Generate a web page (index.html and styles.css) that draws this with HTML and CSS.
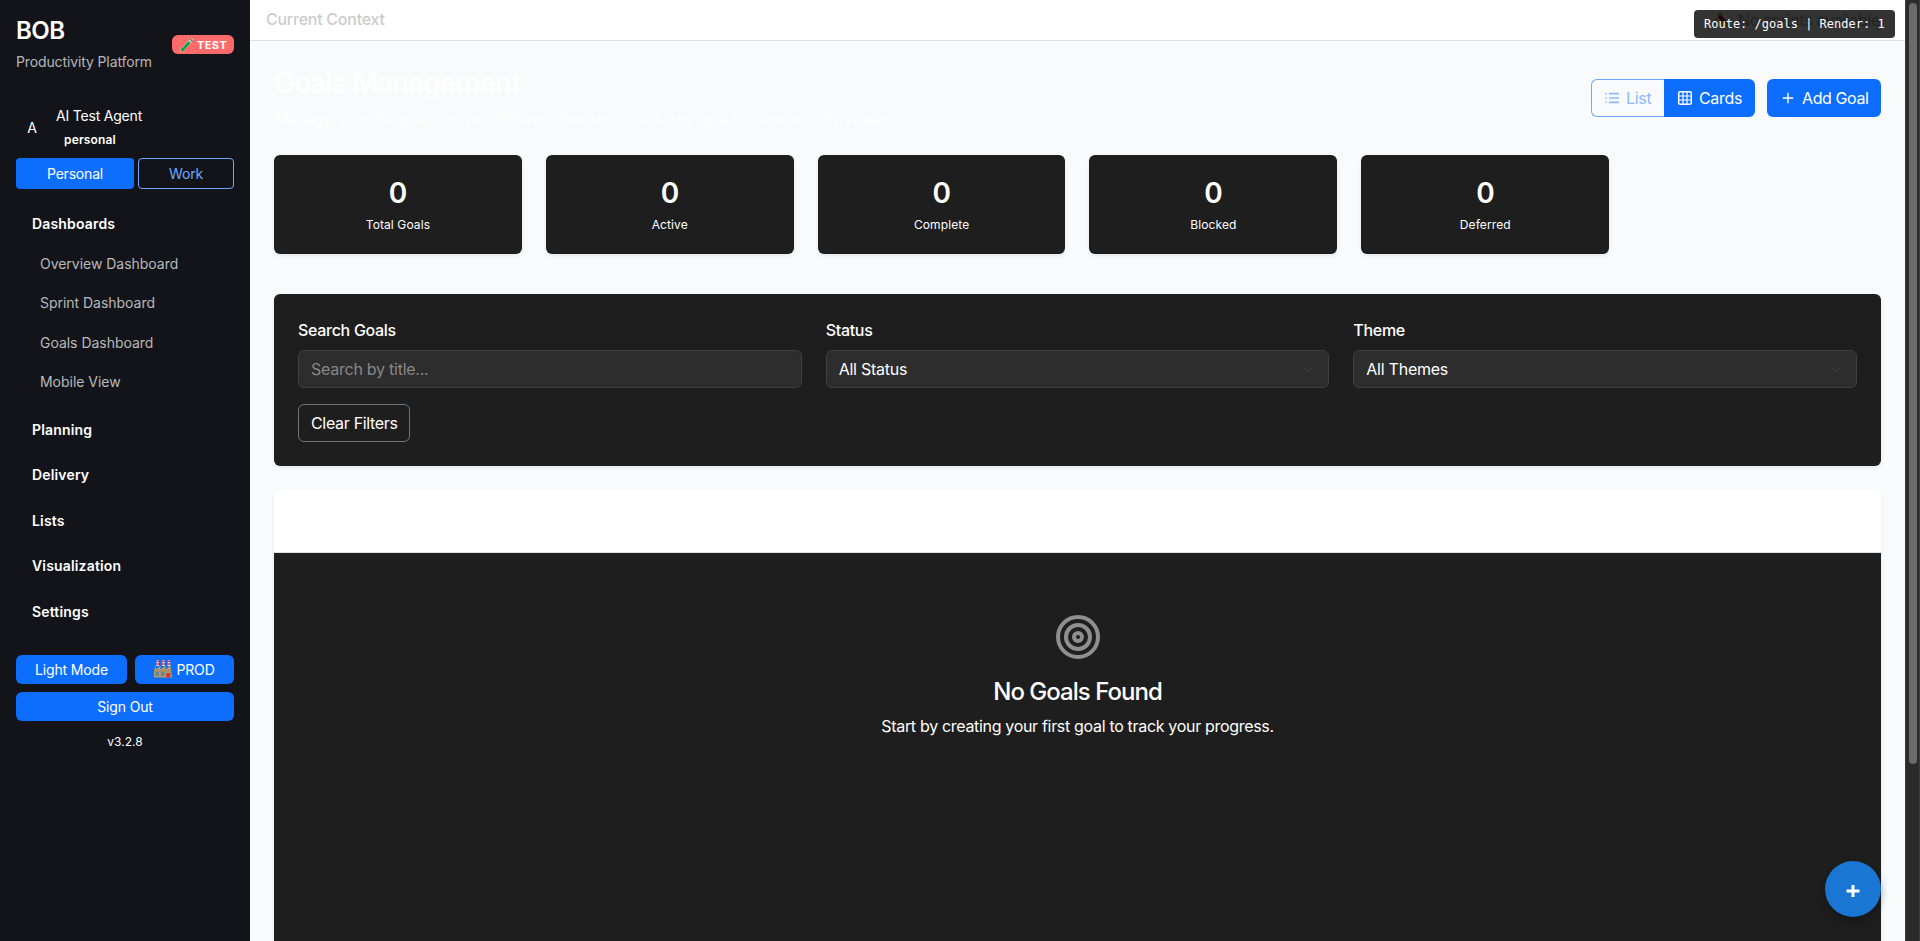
FILE: index.html
```html
<!DOCTYPE html>
<html lang="en">
<head>
<meta charset="utf-8">
<title>BOB - Goals</title>
<link rel="stylesheet" href="styles.css">
</head>
<body>
<div class="app">
  <aside class="sidebar">
    <div class="brand">
      <div>
        <h4 class="brand-name">BOB</h4>
        <div class="brand-sub">Productivity Platform</div>
      </div>
      <span class="badge-test"><svg width="14" height="14" viewBox="0 0 14 14"><path d="M2 12.2 11.3 2" stroke="#b9d9c4" stroke-width="3.4" stroke-linecap="round"/><path d="M2.2 12 8.800 4.800" stroke="#149a3c" stroke-width="2.6" stroke-linecap="round"/><path d="M10 1 12.500 3.200" stroke="#7e6a72" stroke-width="1.200" stroke-linecap="round"/></svg><span class="badge-text">TEST</span></span>
    </div>
    <div class="user">
      <span class="avatar">A</span>
      <div class="user-info"><div class="user-name">AI Test Agent</div><div class="user-role">personal</div></div>
    </div>
    <div class="persona"><button class="btn-sm btn-personal">Personal</button><button class="btn-sm btn-work">Work</button></div>
    <nav class="nav">
      <div class="group">Dashboards</div>
      <div class="sub">
        <a class="item">Overview Dashboard</a>
        <a class="item">Sprint Dashboard</a>
        <a class="item">Goals Dashboard</a>
        <a class="item">Mobile View</a>
      </div>
      <div class="group">Planning</div>
      <div class="group">Delivery</div>
      <div class="group">Lists</div>
      <div class="group">Visualization</div>
      <div class="group">Settings</div>
    </nav>
    <div class="foot">
      <div class="foot-row">
        <button class="btn-foot btn-light">Light Mode</button>
        <button class="btn-foot btn-prod"><svg width="18" height="18" viewBox="0 0 18 18"><path d="M2.300 6 2.700 0h2l.4 6zM8 6l.4-6h2l.4 6zM13.600 6 14 0h2l.4 6z" fill="#e9e4e6"/><path d="M2.600 1.200h2.200M2.400 4h2.600M8.300 1.200h2.200M8.100 4h2.600M13.900 1.200h2.200M13.700 4h2.600" stroke="#d8303c" stroke-width="1.500"/><path d="M0 17.500V10l2-5v4.500L6.500 5.500v4L11.500 5.500v4L16.500 5.500 18 17.500z" fill="#b79a6b"/><path d="M0 11h18" stroke="#94784f" stroke-width=".8"/><path d="M1.500 12h3.500v4H1.500zM7 12h3.500v4H7z" fill="#5f8797"/><path d="M12.300 13h4v4.500h-4z" fill="#d6342d"/></svg><span>PROD</span></button>
      </div>
      <button class="btn-foot btn-out">Sign Out</button>
      <div class="version">v3.2.8</div>
    </div>
  </aside>
  <div class="content">
    <header class="topbar">
      <span class="context">Current Context</span>
      <span class="sprints"><svg width="16" height="16" viewBox="0 0 16 16"><circle cx="6" cy="2.500" r="2" fill="#f0b428"/><path d="M6 5 10 9" stroke="#b3123c" stroke-width="4" stroke-linecap="round"/><path d="M9 10 6 13H2M10 10l3 2v3M5 6 1 8" stroke="#f0b428" stroke-width="1.500" fill="none"/></svg>No sprints available</span>
    </header>
    <main class="main">
      <div class="page-head">
        <div>
          <h2 class="title">Goals Management</h2>
          <p class="subtitle">Manage your life goals across different themes - Click any goal to view activity stream</p>
        </div>
        <div class="actions">
          <div class="toggle">
            <button class="btn btn-list"><svg width="16" height="16" viewBox="0 0 16 16"><path d="M5 3.600h10M5 8h10M5 12.400h10" stroke="currentColor" stroke-width="1.700"/><path d="M1 3.600h2M1 8h2M1 12.400h2" stroke="currentColor" stroke-width="1.700" opacity=".6"/></svg>List</button>
            <button class="btn btn-cards"><svg width="16" height="16" viewBox="0 0 16 16"><rect x="1.700" y="1.700" width="12.600" height="12.600" rx="1.500" fill="none" stroke="currentColor" stroke-width="1.500"/><path d="M6 1.500v13M10 1.500v13M1.500 6h13M1.500 10h13" stroke="currentColor" stroke-width="1.200"/></svg>Cards</button>
          </div>
          <button class="btn btn-add"><svg width="16" height="16" viewBox="0 0 16 16"><path d="M8 2.800v10.400M2.800 8h10.400" stroke="currentColor" stroke-width="1.400"/></svg>Add Goal</button>
        </div>
      </div>
      <section class="stats">
        <div class="stat"><div class="num">0</div><div class="lbl">Total Goals</div></div>
        <div class="stat"><div class="num">0</div><div class="lbl">Active</div></div>
        <div class="stat"><div class="num">0</div><div class="lbl">Complete</div></div>
        <div class="stat"><div class="num">0</div><div class="lbl">Blocked</div></div>
        <div class="stat"><div class="num">0</div><div class="lbl">Deferred</div></div>
      </section>
      <section class="filters">
        <div class="fields">
          <div><label class="label">Search Goals</label><div class="control"><span class="placeholder">Search by title...</span></div></div>
          <div><label class="label">Status</label><div class="control"><span>All Status</span><svg class="chev" width="16" height="12" viewBox="0 0 16 16"><path d="m2 5 6 6 6-6" fill="none" stroke="#343a40" stroke-width="2" stroke-linecap="round" stroke-linejoin="round"/></svg></div></div>
          <div><label class="label">Theme</label><div class="control"><span>All Themes</span><svg class="chev" width="16" height="12" viewBox="0 0 16 16"><path d="m2 5 6 6 6-6" fill="none" stroke="#343a40" stroke-width="2" stroke-linecap="round" stroke-linejoin="round"/></svg></div></div>
        </div>
        <button class="btn btn-clear">Clear Filters</button>
      </section>
      <section class="list-card">
        <div class="list-head"></div>
        <div class="empty">
          <svg width="48" height="48" viewBox="0 0 24 24" fill="none" stroke="#8f8f8f" stroke-width="2"><circle cx="12" cy="12" r="10"/><circle cx="12" cy="12" r="6"/><circle cx="12" cy="12" r="2"/></svg>
          <h4 class="empty-title">No Goals Found</h4>
          <p class="empty-text">Start by creating your first goal to track your progress.</p>
        </div>
      </section>
    </main>
  </div>
  <div class="scrollbar"><div class="thumb"></div></div>
</div>
<div class="route">Route: /goals | Render: 1</div>
<button class="fab"><svg width="14" height="14" viewBox="0 0 14 14"><path d="M7 1v12M.5 7h13" stroke="#fff" stroke-width="3"/></svg></button>
</body>
</html>
```
FILE: styles.css
```css
* { box-sizing: border-box; margin: 0; padding: 0; }
body {
  height: 941px;
  overflow: hidden;
  background: #f8fafc;
  color: #fff;
  font: 400 16px/24px Inter, "Liberation Sans", sans-serif;
  letter-spacing: -0.32px;
}
button { font: inherit; letter-spacing: inherit; border: 0; color: #fff; white-space: nowrap; }
svg { flex: none; display: block; }
.app { display: flex; height: 941px; }

.sidebar { width: 250px; flex: none; background: #121419; padding: 16px; font-size: 14px; line-height: 21px; letter-spacing: -0.03px; }
.brand { display: flex; align-items: center; justify-content: space-between; height: 57px; }
.brand-name { font-size: 24px; line-height: 29px; font-weight: 600; letter-spacing: -0.5px; margin-top: -1px; margin-bottom: 6px; }
.brand-sub { color: #b5b6b8; letter-spacing: -0.12px; }
.badge-test { display: flex; align-items: center; gap: 3px; width: 62px; height: 19px; padding-left: 8px; border-radius: 6px; background: #ff6b6b; }
.badge-text { font-size: 11px; font-weight: 700; line-height: 20px; letter-spacing: 0.4px; }
.user { display: flex; align-items: center; gap: 8px; height: 47px; margin-top: 31px; }
.avatar { width: 32px; text-align: center; }
.user-name { line-height: 24px; letter-spacing: -0.2px; }
.user-role { padding-left: 8px; font-size: 12px; font-weight: 600; line-height: 23px; letter-spacing: 0.16px; }
.persona { display: flex; gap: 4px; margin-top: 7px; }
.btn-sm { height: 31px; border-radius: 4px; letter-spacing: -0.2px; }
.btn-personal { width: 118px; background: #0d6efd; }
.btn-work { width: 96px; background: transparent; border: 1px solid #6ea8fe; color: #6ea8fe; }
.nav { padding-top: 12px; }
.group { height: 45.6px; line-height: 46px; padding-left: 16px; font-weight: 600; letter-spacing: 0.16px; }
.sub { padding: 0 0 5px 24px; margin-top: -3px; }
.item { display: block; height: 39.5px; line-height: 39.5px; color: #b8b9ba; }
.foot { margin-top: 20px; }
.foot-row { display: flex; gap: 8px; margin-bottom: 8px; }
.btn-foot { height: 29px; border-radius: 6px; background: #0d6efd; display: flex; align-items: center; justify-content: center; letter-spacing: -0.14px; gap: 4px; }
.btn-light { width: 111px; }
.btn-prod { width: 99px; }
.btn-out { width: 218px; }
.version { margin-top: 10px; font-size: 12px; text-align: center; letter-spacing: 0; }

.content { flex: 1; min-width: 0; display: flex; flex-direction: column; }
.topbar { height: 41px; flex: none; background: #fff; border-bottom: 1px solid #dee2e6; display: flex; justify-content: space-between; padding: 8px 25px 8px 16px; color: #ccc; }
.context { line-height: 23px; font-weight: 500; letter-spacing: -0.25px; }
.sprints { display: flex; gap: 8px; align-items: center; color: #aaa; }
.main { flex: 1; padding: 24px; overflow: hidden; }
.page-head { display: flex; justify-content: space-between; align-items: center; height: 66px; }
.title { font-size: 28px; line-height: 34px; font-weight: 600; letter-spacing: -1px; margin-top: 1px; margin-bottom: 7px; }
.subtitle { color: #fff; letter-spacing: -0.36px; }
.actions { display: flex; gap: 12px; }
.toggle { display: flex; }
.btn { height: 38px; border-radius: 6px; display: flex; align-items: center; padding: 0 13px; gap: 8px; }
.btn-list { width: 73px; border: 1px solid #6ea8fe; border-right: 0; border-radius: 6px 0 0 6px; background: transparent; color: #8bb9fe; padding: 0 12px; gap: 6px; }
.btn-cards { width: 91px; background: #0d6efd; border-radius: 0 6px 6px 0; gap: 6px; }
.btn-add { width: 114px; background: #0d6efd; gap: 6px; letter-spacing: -0.4px; }
.stats { display: grid; grid-template-columns: repeat(6, 1fr); gap: 24px; margin-top: 24px; }
.stat { height: 99px; border-radius: 6px; background: #1e1e1e; box-shadow: 0 2px 4px rgba(0,0,0,.075); text-align: center; padding-top: 21px; }
.num { font-size: 28px; line-height: 34px; font-weight: 600; }
.lbl { margin-top: 6px; font-size: 12px; line-height: 18px; letter-spacing: 0.1px; }
.filters { height: 172px; margin-top: 40px; padding: 24px; border-radius: 6px; background: #1e1e1e; box-shadow: 0 2px 4px rgba(0,0,0,.075); }
.fields { display: grid; grid-template-columns: repeat(3, 1fr); gap: 24px; }
.label { display: block; margin-bottom: 8px; font-weight: 500; letter-spacing: -0.3px; }
.control { height: 38px; border: 1px solid #404040; border-radius: 6px; background: #2d2d2d; padding: 0 12px; display: flex; align-items: center; justify-content: space-between; letter-spacing: -0.25px; }
.placeholder { color: #888; }
.btn-clear { width: 112px; margin-top: 16px; padding: 0 12px; border: 1px solid #6c757d; background: transparent; }
.list-card { margin-top: 24px; border-radius: 6px 6px 0 0; box-shadow: 0 2px 4px rgba(0,0,0,.075); }
.list-head { height: 63px; background: #fff; border-bottom: 1px solid #dee2e6; border-radius: 6px 6px 0 0; }
.empty { display: flex; flex-direction: column; align-items: center; height: 437px; padding-top: 60px; background: #1e1e1e; }
.empty-title { margin-top: 16px; font-size: 24px; line-height: 29px; font-weight: 500; letter-spacing: -0.98px; }
.empty-text { margin-top: 8px; }

.scrollbar { width: 15px; flex: none; background: #2b2b2b; border-left: 1px solid #3c3c3c; border-right: 1px solid #3c3c3c; padding: 3px 2px 0 3px; }
.thumb { width: 8px; height: 761px; border-radius: 4px; background: #6b6b6b; }
.route { position: absolute; left: 1694px; top: 10px; width: 201px; height: 28px; border-radius: 4px; background: rgba(0,0,0,.8); padding-left: 10px; font: 12px/28px "DejaVu Sans Mono", monospace; letter-spacing: 0; white-space: nowrap; }
.fab { position: absolute; left: 1825px; top: 861px; width: 56px; height: 56px; border-radius: 50%; background: #1976d2; box-shadow: 0 4px 8px rgba(0,0,0,.3); display: flex; align-items: center; justify-content: center; padding-top: 4px; }
```
